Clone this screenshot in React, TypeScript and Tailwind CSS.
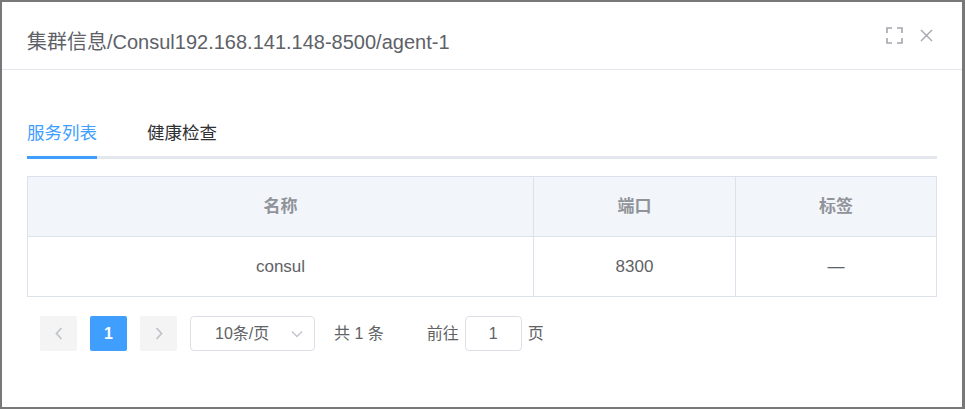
import React from "react";

const font = "font-['Liberation_Sans','Noto_Sans_CJK_SC',sans-serif]";

function FullscreenIcon() {
  return (
    <svg width="17" height="17" viewBox="0 0 17 17" fill="none" stroke="#a3a6ad" strokeWidth="1.6">
      <path d="M1 6V1h5M11 1h5v5M16 11v5h-5M6 16H1v-5" />
    </svg>
  );
}

function CloseIcon() {
  return (
    <svg width="13" height="13" viewBox="0 0 13 13" fill="none" stroke="#a3a6ad" strokeWidth="1.4">
      <path d="M1 1l11 11M12 1L1 12" />
    </svg>
  );
}

function Chevron({ dir }: { dir: "left" | "right" | "down" }) {
  if (dir === "down") {
    return (
      <svg width="12" height="8" viewBox="0 0 12 8" fill="none" stroke="#c0c4cc" strokeWidth="1.3">
        <path d="M1 1.5l5 5 5-5" />
      </svg>
    );
  }
  return (
    <svg width="8" height="13" viewBox="0 0 8 13" fill="none" stroke="#c0c4cc" strokeWidth="1.8">
      <path d={dir === "left" ? "M6.5 1L1.5 6.5 6.5 12" : "M1.5 1l5 5.5-5 5.5"} />
    </svg>
  );
}

export default function App() {
  return (
    <div className={`h-[409px] w-[965px] overflow-hidden bg-[#787878] pt-[2px] pl-[2px] ${font}`}>
      <div className="flex h-[405px] w-[960px] flex-col bg-white">
        {/* header */}
        <div className="flex h-[68px] items-center justify-between border-b border-[#e4e7ed] pl-[25px] pr-[29px]">
          <div className="mt-[12px] text-[20px] text-[#5e6168]">集群信息/Consul192.168.141.148-8500/agent-1</div>
          <div className="flex items-center gap-[17px]">
            <FullscreenIcon />
            <CloseIcon />
          </div>
        </div>

        {/* body */}
        <div className="px-[25px] pt-[40px]">
          <div className="relative">
            <div className="flex">
              <div className="h-[46px] pr-[25px] text-[17.5px] leading-[46px] text-[#409eff]">服务列表</div>
              <div className="h-[46px] px-[25px] text-[17.5px] leading-[46px] text-[#303133]">健康检查</div>
            </div>
            <div className="relative h-[3px] bg-[#e4e7ed]">
              <div className="absolute left-0 top-0 h-[3px] w-[70px] bg-[#409eff]" />
            </div>
          </div>

          <table className="mt-[17px] w-[910px] border-collapse text-[17px]">
            <thead>
              <tr className="h-[60px] bg-[#f2f5fa] font-bold text-[#909399]">
                <th className="w-[506px] border border-[#dbe2eb] text-center">名称</th>
                <th className="w-[202px] border border-[#dbe2eb] text-center">端口</th>
                <th className="border border-[#dbe2eb] text-center">标签</th>
              </tr>
            </thead>
            <tbody>
              <tr className="h-[60px] text-[#606266]">
                <td className="border border-[#dbe2eb] text-center">consul</td>
                <td className="border border-[#dbe2eb] text-center">8300</td>
                <td className="border border-[#dbe2eb] text-center">—</td>
              </tr>
            </tbody>
          </table>

          {/* pagination */}
          <div className="mt-[19px] flex items-center pl-[13px] text-[16px] text-[#606266]">
            <div className="flex h-[35px] w-[37px] items-center justify-center rounded-[2px] bg-[#f4f4f5]">
              <Chevron dir="left" />
            </div>
            <div className="ml-[13px] flex h-[35px] w-[37px] items-center justify-center rounded-[2px] bg-[#409eff] font-bold text-white">
              1
            </div>
            <div className="ml-[13px] flex h-[35px] w-[37px] items-center justify-center rounded-[2px] bg-[#f4f4f5]">
              <Chevron dir="right" />
            </div>
            <div className="ml-[13px] flex h-[35px] w-[125px] items-center rounded-[4px] border border-[#dcdfe6] pl-[24px] pr-[11px]">
              <span className="flex-1">10条/页</span>
              <Chevron dir="down" />
            </div>
            <span className="ml-[19px]">共 1 条</span>
            <span className="ml-[43px]">前往</span>
            <div className="ml-[6px] flex h-[35px] w-[57px] items-center justify-center rounded-[4px] border border-[#dcdfe6]">
              1
            </div>
            <span className="ml-[6px]">页</span>
          </div>
        </div>
      </div>
    </div>
  );
}
